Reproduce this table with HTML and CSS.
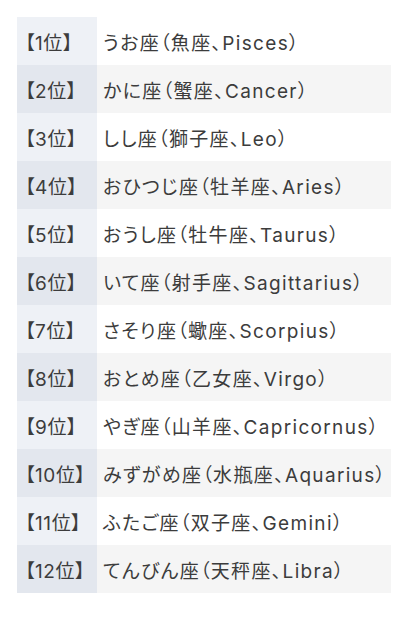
FILE: index.html
```html
<!DOCTYPE html>
<html lang="ja">
<head>
<meta charset="utf-8">
<link rel="stylesheet" href="styles.css">
</head>
<body>
<table class="rank">
<tbody>
<tr><th>【1位】</th><td>うお座（魚座、Pisces）</td></tr>
<tr><th>【2位】</th><td>かに座（蟹座、Cancer）</td></tr>
<tr><th>【3位】</th><td>しし座（獅子座、Leo）</td></tr>
<tr><th>【4位】</th><td>おひつじ座（牡羊座、Aries）</td></tr>
<tr><th>【5位】</th><td>おうし座（牡牛座、Taurus）</td></tr>
<tr><th>【6位】</th><td>いて座（射手座、Sagittarius）</td></tr>
<tr><th>【7位】</th><td>さそり座（蠍座、Scorpius）</td></tr>
<tr><th>【8位】</th><td>おとめ座（乙女座、Virgo）</td></tr>
<tr><th>【9位】</th><td>やぎ座（山羊座、Capricornus）</td></tr>
<tr><th>【10位】</th><td>みずがめ座（水瓶座、Aquarius）</td></tr>
<tr><th>【11位】</th><td>ふたご座（双子座、Gemini）</td></tr>
<tr><th>【12位】</th><td>てんびん座（天秤座、Libra）</td></tr>
</tbody>
</table>
</body>
</html>
```
FILE: styles.css
```css
html, body {
  margin: 0;
  background: #ffffff;
}
body {
  padding: 17px;
  font-family: "Inter", "Noto Sans CJK JP", sans-serif;
  font-size: 19px;
  color: #3c3c3c;
  font-feature-settings: "palt";
}
.rank {
  border-collapse: collapse;
  border-spacing: 0;
  width: 374px;
  table-layout: fixed;
}
.rank th,
.rank td {
  height: 48px;
  padding: 0;
  text-align: left;
  font-weight: normal;
  vertical-align: middle;
  white-space: nowrap;
}
.rank th {
  width: 72px;
  padding-left: 8px;
  letter-spacing: 0.03em;
  background: #eef1f6;
}
.rank td {
  padding-left: 6px;
  letter-spacing: 0.07em;
  background: #ffffff;
}
.rank tr:nth-child(even) th {
  background: #e3e7ee;
}
.rank tr:nth-child(even) td {
  background: #f5f5f5;
}
```
